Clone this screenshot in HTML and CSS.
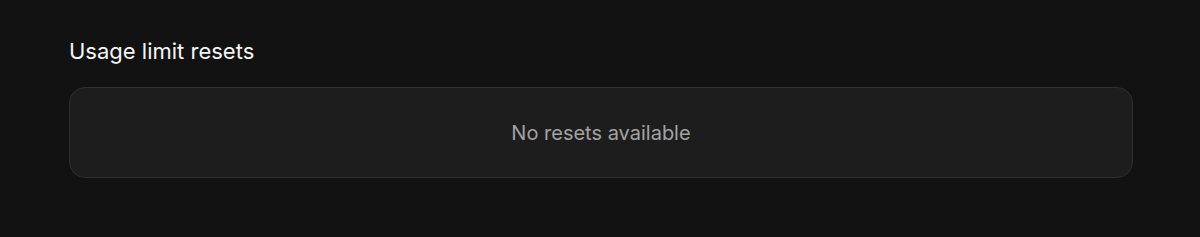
FILE: index.html
```html
<!DOCTYPE html>
<html>
<head>
    <title>Usage limit resets</title>
    <link rel="stylesheet" href="styles.css">
</head>
<body>
    <div class="section">
        <h2 class="section-title">Usage limit resets</h2>
        <div class="empty-box">No resets available</div>
    </div>
</body>
</html>
```

FILE: styles.css
```css
body {
    margin: 0;
    background: #121212;
    font-family: Inter, "Noto Sans", sans-serif;
}

.section {
    padding: 37px 67px 0 69px;
}

.section-title {
    margin: 0 0 22px 0;
    font-size: 22px;
    line-height: 28px;
    font-weight: 400;
    color: #f5f5f5;
}

.empty-box {
    height: 89px;
    display: flex;
    justify-content: center;
    align-items: center;
    background: #1d1d1d;
    border: 1px solid #2f2f2f;
    border-radius: 16px;
    font-size: 20px;
    color: #a3a3a3;
}
```
